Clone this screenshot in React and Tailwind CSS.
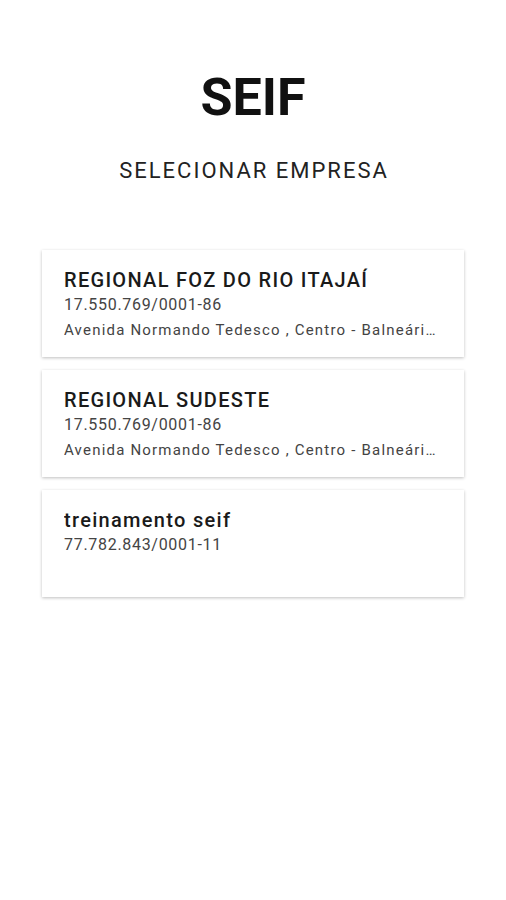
export default function App() {
  const items = [
    { name: "REGIONAL FOZ DO RIO ITAJAÍ", cnpj: "17.550.769/0001-86", addr: "Avenida Normando Tedesco , Centro - Balneário Camboriú - SC" },
    { name: "REGIONAL SUDESTE", cnpj: "17.550.769/0001-86", addr: "Avenida Normando Tedesco , Centro - Balneário Camboriú - SC" },
    { name: "treinamento seif", cnpj: "77.782.843/0001-11", addr: "" },
  ];
  return (
    <div className="w-[506px] h-[900px] bg-white flex flex-col items-center" style={{ fontFamily: "Roboto, 'Liberation Sans', sans-serif" }}>
      <h1 className="mt-[68px] text-[52px] leading-[60px] font-bold text-[#111]">SEIF</h1>
      <p className="mt-[29px] text-[22px] leading-[28px] tracking-[2px] text-[#222] pl-[2px]">SELECIONAR EMPRESA</p>
      <div className="mt-[65px] w-[422px] flex flex-col gap-[13px]">
        {items.map((it, i) => (
          <div key={i} className="h-[107px] bg-white shadow-[0_1px_3px_rgba(0,0,0,0.25)] px-[22px] pt-[16px]">
            <div className="text-[20px] leading-[28px] font-medium tracking-[1.3px] text-[#1a1a1a] truncate">{it.name}</div>
            <div className="text-[16px] leading-[22px] tracking-[0.7px] text-[#444]">{it.cnpj}</div>
            {it.addr && <div className="mt-[2px] text-[15px] leading-[24px] tracking-[1.2px] text-[#444] truncate w-[375px]">{it.addr}</div>}
          </div>
        ))}
      </div>
    </div>
  );
}
